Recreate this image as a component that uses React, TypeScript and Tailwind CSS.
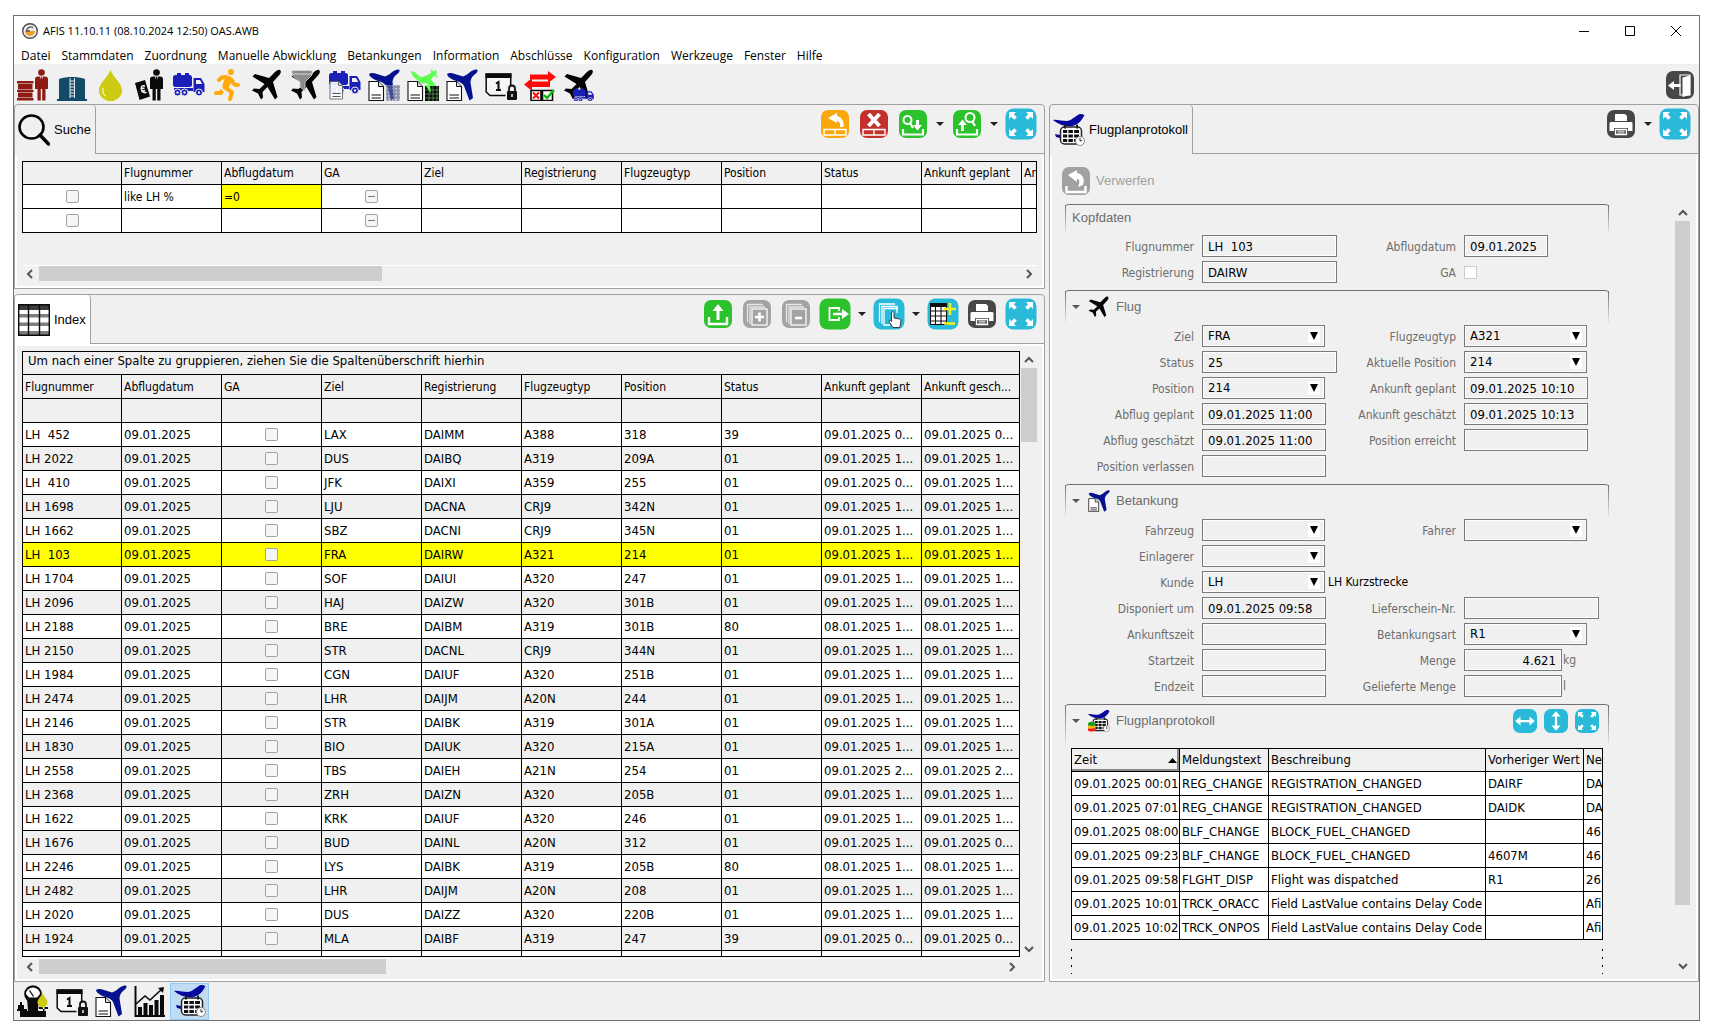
import React, { useState } from 'react';
import { FaPersonRunning } from 'react-icons/fa6';

type IconProps = { size?: number };

const PLANE =
  'M29 1c1.800 1.200.6 4-2 6.500L22 13l4.500 15-2.500 2.500L16.500 18l-5 5 .5 5.500-2 2-3-6-6-3 2-2 5.500.5 5-5L1.500 7.500 4 5l14 4 5.500-5.500C26 1 28 .2 29 1z';

/* ---------- pieces shared by several icons ---------- */

const Doc = () => (
  <g>
    <path d="M1 12.500h9.500l5 5v14H1z" fill="#fff" stroke="#111" strokeWidth="1.100" />
    <path d="M10.500 12.500v5h5" fill="#ddd" stroke="#111" strokeWidth="1" />
    <path d="M3.500 26h9.500M3.500 29h9.500" stroke="#111" strokeWidth="1.200" />
  </g>
);

const JetShape = ({ fill }: { fill: string }) => (
  <path
    d="M1 5c2-1.500 5-1 8 0l8 2.500c3-1 6-3.500 8.500-5.500C28 .5 31 0 31.500 1c.5 2-1.500 3.500-4 5.500-2 2-3 4-3 7L27 29l-3.500 2.500L18 17c-1-2-3-3.500-6-4.500C7 11 1.500 8.500 1 5z"
    fill={fill}
  />
);

const Lock = () => (
  <g>
    <rect x="22" y="22" width="10" height="9" rx="1" fill="#111" />
    <path d="M24 22v-2.500a3 3 0 0 1 6 0V22" fill="none" stroke="#111" strokeWidth="1.800" />
    <path d="M27 25v3" stroke="#fff" strokeWidth="1.400" />
  </g>
);

const TruckShape = ({ fill = '#1a1fb8' }: { fill?: string }) => (
  <g fill={fill}>
    <rect x="0" y="6" width="19" height="12" rx="2.500" />
    <path d="M4 4h4v2H4zM12 4h4v2h-4zM1 19h19v3H1z" />
    <path d="M20.500 9H28l3.500 6v8H20.500z" />
    <path d="M23 11h4l2.300 4H23z" fill="#efefef" />
    <g stroke="#efefef" strokeWidth="1">
      <circle cx="4.500" cy="23.500" r="3.500" />
      <circle cx="11.500" cy="23.500" r="3.500" />
      <circle cx="26" cy="23.500" r="3.500" />
    </g>
    <g fill="#efefef">
      <circle cx="4.500" cy="23.500" r="1.200" />
      <circle cx="11.500" cy="23.500" r="1.200" />
      <circle cx="26" cy="23.500" r="1.200" />
    </g>
  </g>
);

const Person = ({ fill, x }: { fill: string; x: number }) => (
  <g transform={`translate(${x} 0)`}>
    <circle cx="6.500" cy="3.500" r="3.300" fill={fill} />
    <path d="M3 7.500h7c2 0 3 1 3 2.700V20h-2.500V13v18.500H7.200V20H5.800v11.500H2.500V13v7H0v-9.800C0 8.500 1 7.500 3 7.500z" fill={fill} />
    <path d="M4.800 7.500 6.500 12l1.700-4.500z" fill="#efefef" />
    <path d="M6.500 8v7" stroke={fill} strokeWidth="1.200" />
  </g>
);

const Svg = ({ size = 32, children }: IconProps & { children: React.ReactNode }) => (
  <svg width={size} height={size} viewBox="0 0 32 32" className="block shrink-0" aria-hidden="true">
    {children}
  </svg>
);

/* ---------- main toolbar icons ---------- */

const StaffIcon = () => (
  <Svg>
    <g fill="#8e1b14">
      <path d="M0 12h16.500v2.500H0zM1 15h14.500v5.500H1zM0 21h16.500v2H0zM1 23.500h14.500v5H1zM0 29h16.500v2.500H0z" />
    </g>
    <Person fill="#8e1b14" x={18} />
  </Svg>
);

const TankIcon = () => (
  <Svg>
    <path d="M3 10C7 8.500 12 8 16 8s9 .5 13 2v20h2v2H1v-2h2z" fill="#124a68" />
    <path d="M14 9v20M18.500 9v20M14 12h4.500M14 15h4.500M14 18h4.500M14 21h4.500M14 24h4.500M14 27h4.500" stroke="#e3ecf1" strokeWidth="1" />
  </Svg>
);

const DropIcon = () => (
  <Svg>
    <path d="M15.500 1c3 8 11.500 13 11.500 20.500a11.500 10.500 0 0 1-23 0C4 14 12.500 9 15.500 1z" fill="#cdca12" />
    <path d="M8 19c-.8 3 .2 6 2.500 8" fill="none" stroke="#f2f0a0" strokeWidth="1.500" />
  </Svg>
);

const MoneyIcon = () => (
  <Svg>
    <path d="m1 14 10-3 5 16.500L5.500 31z" fill="#0a0a0a" />
    <path d="M11 17c-3-1-4 .5-3.500 3s2.500 5 5 3M6.500 20l4-1M7.200 22.500l4-1" stroke="#efefef" strokeWidth="1.500" fill="none" />
    <Person fill="#0a0a0a" x={16} />
  </Svg>
);

const TruckIcon = () => (
  <Svg>
    <TruckShape />
  </Svg>
);

const PlaneIcon = ({ size }: IconProps) => (
  <Svg size={size}>
    <path d={PLANE} fill="#050505" />
  </Svg>
);

const FilterPlaneIcon = () => (
  <Svg>
    <path d={PLANE} fill="#050505" />
    <path d="M2 1.500h20v4.500l-7 7v9l-5-4v-5L2 6z" fill="#8b8b8b" stroke="#d5d5d5" strokeWidth=".8" />
    <path d="M2 5h20" stroke="#d5d5d5" strokeWidth="1" />
  </Svg>
);

const TruckDocIcon = () => (
  <Svg>
    <g transform="translate(0 -2)">
      <TruckShape />
    </g>
    <g opacity=".9">
      <path d="M1 12.500h8.500l4 4V30H1z" fill="#fff" stroke="#666" />
      <path d="M9.500 12.500v4h4" fill="#ddd" stroke="#666" />
      <path d="M3.500 24.500h8M3.500 27.500h8" stroke="#444" />
    </g>
  </Svg>
);

const GridMarks = ({ color }: { color: string }) => (
  <path
    d="M19.500 16v16M23 16v16M26.500 16v16M30 16v16M18 18h14M18 21.500h14M18 25h14M18 28.500h14"
    stroke={color}
    strokeWidth="1.800"
  />
);

const JetGridIcon = () => (
  <Svg>
    <JetShape fill="#04128f" />
    <Doc />
    <rect x="18" y="16" width="14" height="16" fill="#c9cdda" />
    <GridMarks color="#8d93a8" />
    <path d="m19 15 5-2 2 17-3 1z" fill="#04128f" opacity=".55" />
  </Svg>
);

const GreenJetIcon = () => (
  <Svg>
    <path d="M4 2c3 0 6 3 9 6 4 0 8-2 12-5l4-2 1 3-6 6 5 7-3 2-7-5c-3 1-6 0-8-2C8 9 4 6 4 2z" fill="#5dff51" />
    <path d="m24 1 6 7" stroke="#5dff51" strokeWidth="1.500" />
    <Doc />
    <rect x="18" y="17" width="14" height="15" fill="#0a0a0a" />
    <path d="M18 21h14M18 25h14M18 29h14M22 17v15M26 17v15M30 17v15" stroke="#5d8f5a" strokeWidth=".8" />
    <path d="m18 16 6 8-1-8z" fill="#5dff51" />
  </Svg>
);

const JetDocIcon = ({ size }: IconProps) => (
  <Svg size={size}>
    <Doc />
    <JetShape fill="#04128f" />
  </Svg>
);

const CalendarLockIcon = () => (
  <Svg>
    <path d="M1.200 5h24.500v16.500L21 26.500H5L1.200 23z" fill="#f6f6f6" stroke="#0a0a0a" strokeWidth="1.500" />
    <path d="M.5 4.500h26V9H.5z" fill="#0a0a0a" />
    <path d="M11 14.500 13.500 13v8M11 21h5" fill="none" stroke="#0a0a0a" strokeWidth="2" />
    <rect x="20.500" y="16" width="11.500" height="16" fill="#efefef" />
    <Lock />
  </Svg>
);

const SwapIcon = () => (
  <Svg>
    <path d="M6 5.500h18V2l8 6-8 6v-3.500H6z" fill="#ff0a0a" />
    <path d="M26 12.500H8V9l-8 6.500L8 22v-4h18z" fill="#ff0a0a" />
    <path d="M7 21.500h10v10H7zM18.500 21.500h10v10h-10z" fill="#fff" stroke="#0a0a0a" strokeWidth="1.600" />
    <path d="m9 23.500 6 6m0-6-6 6" stroke="#ff0a0a" strokeWidth="2" />
    <path d="m20 26 3 3 7-8" fill="none" stroke="#08b808" strokeWidth="2.400" />
  </Svg>
);

const PlaneTruckIcon = () => (
  <Svg>
    <path d={PLANE} fill="#050505" />
    <g transform="translate(10 17) scale(.66 .58)">
      <TruckShape />
    </g>
  </Svg>
);

const FlightPlanIcon = ({ size, badge }: IconProps & { badge?: boolean }) => (
  <Svg size={size}>
    <path d="M0 6c3-1 9 1 14 1 6-1 9-6 13-7 3 0 5 1 4 2-2 4-6 9-12 10-7 1-14-2-19-6z" fill="#0708a0" />
    <path d="m2 20 5 1v3l-4-1z" fill="#0708a0" />
    <rect x="7.500" y="13" width="21" height="17" rx="4" fill="#fff" stroke="#222" strokeWidth="1.500" />
    <path d="M12 10.500v4M24 10.500v4" stroke="#222" strokeWidth="2" />
    <path d="M10 17.500h16M10 22h16M10 26.500h16" stroke="#111" strokeWidth="3.200" />
    <path d="M14.800 15v14M20.500 15v14" stroke="#fff" strokeWidth="1.200" />
    <circle cx="27" cy="27" r="4.500" fill="#fff" stroke="#888" />
    <path d="M27 24v3.200l2-1" fill="none" stroke="#333" />
    {badge && (
      <g>
        <path d="M0 20c0-4 11-4 11 0v3H0z" fill="#12a012" />
        <path d="M0 23h11v4H0z" fill="#ffb400" />
        <path d="M0 27h11v2c0 3-11 3-11 0z" fill="#f02010" />
      </g>
    )}
  </Svg>
);

const ScaleIcon = () => (
  <Svg>
    <circle cx="16" cy="9" r="8.800" fill="#0a0a0a" />
    <path d="M9 9a7 6.500 0 0 1 14 0l-3 3.500h-8z" fill="#fff" />
    <path d="m16.500 11.500-4-6" stroke="#0a0a0a" strokeWidth="1.300" />
    <path d="M10 13h12l-1 13H11zM3 26h26v6H3z" fill="#0a0a0a" />
    <path d="M3 17h2v3h2v5H1v-5h2zM0 24h10v2H0zM22 24h9v-2h-9zM26 22h1.500v5H26z" fill="#0a0a0a" />
    <path d="M25.500 8c1.500 4 5 6 5 9.500a5 5 0 0 1-10 0C20.500 14 24 12 25.500 8z" fill="#cdca12" />
  </Svg>
);

const ChartIcon = () => (
  <Svg>
    <path d="M1.500 1v30H31" fill="none" stroke="#0a0a0a" strokeWidth="2" />
    <path d="M4 22h4v9H4zM9.500 18h4v13h-4zM15 20h4v11h-4zM20.500 15h4v16h-4zM26 10h4v21h-4z" fill="#0a0a0a" />
    <path d="m2 19 9-8 5 4L28 4" fill="none" stroke="#0a0a0a" strokeWidth="1.600" />
    <path d="m24 3 6-1-1 6z" fill="#0a0a0a" />
  </Svg>
);

const SearchIcon = () => (
  <Svg>
    <ellipse cx="13.500" cy="13" rx="12" ry="11.500" fill="none" stroke="#050505" strokeWidth="2.600" />
    <path d="m22 21 8.500 9" stroke="#050505" strokeWidth="3.400" strokeLinecap="round" />
  </Svg>
);

const TableIcon = () => (
  <Svg>
    <rect x="0" y="0" width="32" height="32" fill="#fff" />
    <path d="M0 0h32v6H0z" fill="#3c3c3c" />
    <path d="M0 10h32v3.500H0zM0 18.500h32V22H0zM0 27h32v4H0z" fill="#7d7d7d" />
    <path d="M.7.7h30.600v30.600H.7zM10.500 0v32M21.500 0v32" fill="none" stroke="#0a0a0a" strokeWidth="1.400" />
  </Svg>
);

/* ---------- rounded action icons ---------- */

const Tile = ({ color, big, children }: { color: string; big?: boolean; children: React.ReactNode }) => (
  <Svg>
    {big ? (
      <rect x=".5" y=".5" width="31" height="31" rx="8" fill={color} />
    ) : (
      <rect x="2" y="2" width="28" height="28" rx="7" fill={color} />
    )}
    {children}
  </Svg>
);

const ExpandArrows = () => (
  <g fill="#fff">
    <path d="M4 4h7L8.800 6.200l3 3-2.600 2.600-3-3L4 11zM28 4v7l-2.200-2.200-3 3-2.600-2.600 3-3L21 4zM4 28v-7l2.200 2.200 3-3 2.600 2.600-3 3L11 28zM28 28h-7l2.200-2.200-3-3 2.600-2.600 3 3L28 21z" />
  </g>
);

const Expand = () => (
  <Tile color="#29bada" big>
    <ExpandArrows />
  </Tile>
);

const RowReset = () => (
  <Tile color="#f9a80c">
    <path d="M5 21.500h22v5.500H5zM16 21.500v5.500" fill="none" stroke="#fff" strokeWidth="1.400" />
    <path d="m9 10 9-5v3c4.500 1 7.500 5 6.500 11H21c.5-4-.5-5.500-3-6V15z" fill="#fff" />
  </Tile>
);

const RowDelete = () => (
  <Tile color="#c4302b">
    <path d="M5 21.500h22v5.500H5zM16 21.500v5.500" fill="none" stroke="#fff" strokeWidth="1.400" />
    <path d="m10.500 6 11 12m0-12-11 12" stroke="#fff" strokeWidth="4" />
  </Tile>
);

const SearchDown = () => (
  <Tile color="#2bc22b">
    <circle cx="10.500" cy="12" r="4" fill="none" stroke="#fff" strokeWidth="2" />
    <path d="m13 15 3 5" stroke="#fff" strokeWidth="2.200" />
    <path d="M19 12h3v5h3l-4.500 5.500L16 17h3z" fill="#fff" />
    <path d="M6 21v5.500h20V21" fill="none" stroke="#fff" strokeWidth="2.200" />
  </Tile>
);

const SearchUp = () => (
  <Tile color="#2bc22b">
    <circle cx="19" cy="9.500" r="4.500" fill="none" stroke="#fff" strokeWidth="2" />
    <path d="m21 13 3 5" stroke="#fff" strokeWidth="2.200" />
    <path d="M10 23h3v-6h3l-4.500-5.500L7 17h3z" fill="#fff" />
    <path d="M6 21v5.500h20V21" fill="none" stroke="#fff" strokeWidth="2.200" />
  </Tile>
);

const Upload = () => (
  <Tile color="#2bc22b">
    <path d="M14.500 22h3V13h4L16 6l-5.500 7h4z" fill="#fff" />
    <path d="M7 19v7h18v-7" fill="none" stroke="#fff" strokeWidth="2.400" />
  </Tile>
);

const Copies = ({ plus }: { plus?: boolean }) => (
  <Tile color="#a3a3a3">
    <path d="M6.500 24V6.500H22M9 26V9h15" fill="none" stroke="#e8e8e8" strokeWidth="1.300" />
    <rect x="11" y="11" width="15" height="16" fill="none" stroke="#f4f4f4" strokeWidth="1.400" />
    <path d={plus ? 'M14 19h9M18.500 14.500v9' : 'M15 20h7'} stroke="#fff" strokeWidth="2.600" />
  </Tile>
);

const Export = () => (
  <Tile color="#2bc22b" big>
    <path d="M20 13v-3h-9.500v12H20v-3" fill="none" stroke="#fff" strokeWidth="1.800" />
    <path d="M14 14.700h9V11l7 5-7 5v-3.700h-9z" fill="#fff" />
  </Tile>
);

const PickCopy = () => (
  <Tile color="#29bada" big>
    <path d="M6.500 24V6H22M9 26V8.500h15V12" fill="none" stroke="#fff" strokeWidth="1.300" />
    <path d="M24 15v-4.500H11V27h6" fill="none" stroke="#fff" strokeWidth="1.300" />
    <path d="M18.500 14c1.200-1 2.500 0 2.500 1.500V20l5.500 1c1.500.3 1.500 1.500 1.300 3l-1 5.500h-7L16 23.500c0-1.500 1.500-1.500 2.500 0z" fill="#fff" stroke="#3a3a3a" strokeWidth="1" />
  </Tile>
);

const ColumnsEdit = () => (
  <Tile color="#29bada" big>
    <rect x="3" y="5" width="17" height="22" fill="#fff" />
    <path d="M3 5h17v4H3z" fill="#111" />
    <path d="M3 13h17M3 18h17M3 23h17" stroke="#888" strokeWidth="1.800" />
    <path d="M3.500 5.500h16v21h-16zM8.500 5v22M14 5v22" fill="none" stroke="#111" strokeWidth="1.100" />
    <path d="M17 11h12M23 5v12M17 25.500h11" stroke="#f5f01a" strokeWidth="2.600" />
  </Tile>
);

const Print = () => (
  <Tile color="#474747">
    <path d="M10 6h10l2 2v5H10z" fill="#fff" />
    <path d="M6 14h20c1 0 1.500.6 1.500 1.500V23H23v-3H9v3H4.500v-7.500c0-1 .6-1.500 1.500-1.500z" fill="#fff" />
    <path d="M10.500 21.500h11v5h-11z" fill="#474747" stroke="#fff" strokeWidth="1.300" />
    <path d="M12.500 23.200h7M12.500 25h7" stroke="#fff" strokeWidth=".9" />
  </Tile>
);

const Exit = () => (
  <Tile color="#474747">
    <path d="M16 6h10v20H16z" fill="none" stroke="#fff" strokeWidth="1.200" />
    <path d="m18.500 8.500 7.500-2V26l-7.500 2z" fill="#fff" />
    <path d="M4 16.500 10 12v3h6.500v3H10v3z" fill="#fff" />
  </Tile>
);

const Discard = () => (
  <Tile color="#a1a1a1">
    <path d="m8 10 9-5v3c6 1 8 6 6 12l-5 2c2-5 2-7-1-8.500V17z" fill="#fff" />
    <path d="M6.500 21v6h19v-6" fill="none" stroke="#fff" strokeWidth="2.400" />
  </Tile>
);

const WideTile = ({ kind }: { kind: 'h' | 'v' | 'x' }) => (
  <svg width="24" height="24" viewBox="0 0 32 32" className="block" aria-hidden="true">
    <rect width="32" height="32" rx="9" fill="#29bada" />
    {kind === 'x' ? (
      <ExpandArrows />
    ) : (
      <path
        d="M3 16l7-6v4.500h12V10l7 6-7 6v-4.500H10V22z"
        fill="#fff"
        transform={kind === 'v' ? 'rotate(90 16 16)' : undefined}
      />
    )}
  </svg>
);

/* ---------- data ---------- */

const menu = ['Datei', 'Stammdaten', 'Zuordnung', 'Manuelle Abwicklung', 'Betankungen', 'Information', 'Abschlüsse', 'Konfiguration', 'Werkzeuge', 'Fenster', 'Hilfe'];

const RunnerIcon = () => <FaPersonRunning size={32} color="#ffa90a" />;

const toolbar = [
  { name: 'Personal', icon: StaffIcon },
  { name: 'Tanklager', icon: TankIcon },
  { name: 'Kraftstoff', icon: DropIcon },
  { name: 'Kunden', icon: MoneyIcon },
  { name: 'Fahrzeuge', icon: TruckIcon },
  { name: 'Fahrer', icon: RunnerIcon },
  { name: 'Flüge', icon: PlaneIcon },
  { name: 'Flugfilter', icon: FilterPlaneIcon },
  { name: 'Fahrzeugbelege', icon: TruckDocIcon },
  { name: 'Belegliste', icon: JetGridIcon },
  { name: 'Belegliste neu', icon: GreenJetIcon },
  { name: 'Betankungsbeleg', icon: JetDocIcon },
  { name: 'Tagesabschluss', icon: CalendarLockIcon },
  { name: 'Abgleich', icon: SwapIcon },
  { name: 'Disposition', icon: PlaneTruckIcon },
];

const taskbar = [
  { name: 'Messung', icon: ScaleIcon },
  { name: 'Tagesabschluss', icon: CalendarLockIcon },
  { name: 'Betankungsbeleg', icon: JetDocIcon },
  { name: 'Statistik', icon: ChartIcon },
];

const searchColumns = ['', 'Flugnummer', 'Abflugdatum', 'GA', 'Ziel', 'Registrierung', 'Flugzeugtyp', 'Position', 'Status', 'Ankunft geplant', 'An'];
const indexColumns = ['Flugnummer', 'Abflugdatum', 'GA', 'Ziel', 'Registrierung', 'Flugzeugtyp', 'Position', 'Status', 'Ankunft geplant', 'Ankunft gesch...'];

// flight, destination, registration, type, position, status, planned arrival, estimated arrival
const flights = [
  ['LH  452', 'LAX', 'DAIMM', 'A388', '318', '39', '09.01.2025 0...', '09.01.2025 0...'],
  ['LH 2022', 'DUS', 'DAIBQ', 'A319', '209A', '01', '09.01.2025 1...', '09.01.2025 1...'],
  ['LH  410', 'JFK', 'DAIXI', 'A359', '255', '01', '09.01.2025 0...', '09.01.2025 1...'],
  ['LH 1698', 'LJU', 'DACNA', 'CRJ9', '342N', '01', '09.01.2025 1...', '09.01.2025 1...'],
  ['LH 1662', 'SBZ', 'DACNI', 'CRJ9', '345N', '01', '09.01.2025 1...', '09.01.2025 1...'],
  ['LH  103', 'FRA', 'DAIRW', 'A321', '214', '01', '09.01.2025 1...', '09.01.2025 1...'],
  ['LH 1704', 'SOF', 'DAIUI', 'A320', '247', '01', '09.01.2025 1...', '09.01.2025 1...'],
  ['LH 2096', 'HAJ', 'DAIZW', 'A320', '301B', '01', '09.01.2025 1...', '09.01.2025 1...'],
  ['LH 2188', 'BRE', 'DAIBM', 'A319', '301B', '80', '08.01.2025 1...', '08.01.2025 1...'],
  ['LH 2150', 'STR', 'DACNL', 'CRJ9', '344N', '01', '09.01.2025 1...', '09.01.2025 1...'],
  ['LH 1984', 'CGN', 'DAIUF', 'A320', '251B', '01', '09.01.2025 1...', '09.01.2025 1...'],
  ['LH 2474', 'LHR', 'DAIJM', 'A20N', '244', '01', '09.01.2025 1...', '09.01.2025 1...'],
  ['LH 2146', 'STR', 'DAIBK', 'A319', '301A', '01', '09.01.2025 1...', '09.01.2025 1...'],
  ['LH 1830', 'BIO', 'DAIUK', 'A320', '215A', '01', '09.01.2025 1...', '09.01.2025 1...'],
  ['LH 2558', 'TBS', 'DAIEH', 'A21N', '254', '01', '09.01.2025 2...', '09.01.2025 2...'],
  ['LH 2368', 'ZRH', 'DAIZN', 'A320', '205B', '01', '09.01.2025 1...', '09.01.2025 1...'],
  ['LH 1622', 'KRK', 'DAIUF', 'A320', '246', '01', '09.01.2025 1...', '09.01.2025 1...'],
  ['LH 1676', 'BUD', 'DAINL', 'A20N', '312', '01', '09.01.2025 1...', '09.01.2025 0...'],
  ['LH 2246', 'LYS', 'DAIBK', 'A319', '205B', '80', '08.01.2025 1...', '08.01.2025 1...'],
  ['LH 2482', 'LHR', 'DAIJM', 'A20N', '208', '01', '09.01.2025 1...', '09.01.2025 1...'],
  ['LH 2020', 'DUS', 'DAIZZ', 'A320', '220B', '01', '09.01.2025 1...', '09.01.2025 1...'],
  ['LH 1924', 'MLA', 'DAIBF', 'A319', '247', '39', '09.01.2025 0...', '09.01.2025 0...'],
];

const protocol = [
  ['09.01.2025 00:01', 'REG_CHANGE', 'REGISTRATION_CHANGED', 'DAIRF', 'DA'],
  ['09.01.2025 07:01', 'REG_CHANGE', 'REGISTRATION_CHANGED', 'DAIDK', 'DA'],
  ['09.01.2025 08:00', 'BLF_CHANGE', 'BLOCK_FUEL_CHANGED', '', '46'],
  ['09.01.2025 09:23', 'BLF_CHANGE', 'BLOCK_FUEL_CHANGED', '4607M', '46'],
  ['09.01.2025 09:58', 'FLGHT_DISP', 'Flight was dispatched', 'R1', '26'],
  ['09.01.2025 10:01', 'TRCK_ORACC', 'Field LastValue contains Delay Code', '', 'Afi'],
  ['09.01.2025 10:02', 'TRCK_ONPOS', 'Field LastValue contains Delay Code', '', 'Afi'],
];

/* ---------- building blocks ---------- */

const IconButton = ({ label, disabled, children }: { label: string; disabled?: boolean; children: React.ReactNode }) => (
  <button type="button" aria-label={label} disabled={disabled} className="block size-8 shrink-0">
    {children}
  </button>
);

const SplitButton = ({ label, children }: { label: string; children: React.ReactNode }) => (
  <div className="flex items-center">
    <IconButton label={label}>{children}</IconButton>
    <button type="button" aria-label={`${label} Optionen`} className="flex h-8 w-[15px] items-center justify-end">
      <svg width="8" height="4" viewBox="0 0 8 4" aria-hidden="true">
        <path d="M0 0h8L4 4z" fill="#222" />
      </svg>
    </button>
  </div>
);

const Panel = ({ title, icon, active, actions, className = '', children }: {
  title: string;
  icon: React.ReactNode;
  active?: boolean;
  actions: React.ReactNode;
  className?: string;
  children: React.ReactNode;
}) => (
  <section className={`flex min-h-0 flex-col rounded-t border border-[#a0a0a0] bg-[#f0f0f0] ${className}`}>
    <div className="flex h-[49px] shrink-0">
      <h2 className={`flex items-center gap-1 rounded-t border-r border-[#a0a0a0] pr-1 pl-[3px] font-['Liberation_Sans',sans-serif] text-[13px] ${active ? 'bg-white' : ''}`}>
        {icon}
        {title}
      </h2>
      <div className="flex flex-1 items-start justify-end gap-[7px] border-b border-[#a0a0a0] pt-[3px] pr-[7px]">{actions}</div>
    </div>
    <div className={`flex min-h-0 flex-1 flex-col border-2 border-white p-[5px] ${active ? '' : 'border-t-[#f0f0f0]'}`}>{children}</div>
  </section>
);

const Chevron = ({ dir }: { dir: 'left' | 'right' | 'up' | 'down' }) => {
  const points = { left: 'M6 1 2 5l4 4', right: 'm3 1 4 4-4 4', up: 'M1 7l4-4 4 4', down: 'M1 3l4 4 4-4' };
  return (
    <span className="flex size-[17px] shrink-0 items-center justify-center">
      <svg width="10" height="10" viewBox="0 0 10 10" aria-hidden="true">
        <path d={points[dir]} fill="none" stroke="#555" strokeWidth="2" />
      </svg>
    </span>
  );
};

const HScroll = ({ thumb }: { thumb: string }) => (
  <div className="flex h-4 shrink-0 items-center border-t border-white">
    <Chevron dir="left" />
    <div className="h-full flex-1">
      <div className={`h-full bg-[#cdcdcd] ${thumb}`} />
    </div>
    <Chevron dir="right" />
  </div>
);

const Check = ({ label, mixed }: { label: string; mixed?: boolean }) => (
  <span className="flex items-center justify-center">
    <span className="relative block size-[13px]">
      <input type="checkbox" aria-label={label} className="block size-[13px] appearance-none rounded-xs border border-[#a3a3a3] bg-[#f6f6f6]" />
      {mixed && <span className="pointer-events-none absolute top-[6px] left-[3px] h-px w-[7px] bg-[#777]" />}
    </span>
  </span>
);

const Group = ({ title, icon, height, collapsible, actions, children }: {
  title: string;
  icon?: React.ReactNode;
  height: string;
  collapsible?: boolean;
  actions?: React.ReactNode;
  children: React.ReactNode;
}) => (
  <section className="mb-[7px]">
    <div className={`flex rounded-t border-t border-[#707070] ${height}`}>
      <span className="w-px bg-linear-to-b from-[#707070] to-transparent" />
      <div className={`flex flex-1 items-center px-[6px] ${collapsible ? 'h-8' : 'h-[26px]'}`}>
        {collapsible && (
          <button type="button" aria-label={`${title} einklappen`} className="mr-2 block">
            <svg width="8" height="4" viewBox="0 0 8 4" aria-hidden="true">
              <path d="M0 0h8L4 4z" fill="#555" />
            </svg>
          </button>
        )}
        {icon && <span className="mr-[6px]">{icon}</span>}
        <h3 className="font-['Liberation_Sans',sans-serif] text-[13px] text-[#6d6d6d]">{title}</h3>
        {actions && <div className="ml-auto flex gap-[7px] pr-[3px]">{actions}</div>}
      </div>
      <span className="w-px bg-linear-to-b from-[#707070] to-transparent" />
    </div>
    {children}
  </section>
);

const FieldGrid = ({ children }: { children: React.ReactNode }) => (
  <div className="grid grid-cols-[129px_135px_111px_auto] gap-x-2 gap-y-1">{children}</div>
);

const Label = ({ htmlFor, children }: { htmlFor: string; children: React.ReactNode }) => (
  <label htmlFor={htmlFor} className="flex h-[22px] items-center justify-end pt-px whitespace-nowrap text-[#6d6d6d]">
    {children}
  </label>
);

const boxStyle = 'h-[22px] border border-[#7a7a7a] bg-[#f0f0f0] px-[5px] text-[13px] whitespace-pre shadow-[inset_0_0_0_1px_#fff]';

const Text = ({ id, value = '', width = 'w-[124px]', unit, right }: {
  id: string;
  value?: string;
  width?: string;
  unit?: string;
  right?: boolean;
}) => (
  <span className="flex items-center whitespace-nowrap text-[#6d6d6d]">
    <input id={id} readOnly value={value} className={`${boxStyle} ${width} text-black ${right ? 'text-right' : ''}`} />
    {unit && <span className="ml-px">{unit}</span>}
  </span>
);

const Select = ({ id, value = '', note }: { id: string; value?: string; note?: string }) => (
  <span className="flex items-center whitespace-nowrap">
    <span className="relative block">
      <select id={id} defaultValue={value} className={`${boxStyle} block w-[123px] appearance-none`}>
        <option value={value}>{value}</option>
      </select>
      <span className="pointer-events-none absolute top-1 right-[5px] flex h-[14px] w-3 items-center justify-center bg-white">
        <svg width="8" height="8" viewBox="0 0 8 8" aria-hidden="true">
          <path d="M0 0h8L4 8z" fill="#000" />
        </svg>
      </span>
    </span>
    {note && <span className="ml-[3px]">{note}</span>}
  </span>
);

/* ---------- panels ---------- */

const cellBase = 'overflow-hidden border border-black px-[2px] py-0 text-left font-normal whitespace-pre';
const cell = `${cellBase} h-6 text-[13px]`;
const head = `${cellBase} h-6 text-[12px]`;
const shortHead = `${cellBase} h-[23px]`;

function SearchPanel() {
  return (
    <Panel
      title="Suche"
      icon={<SearchIcon />}
      className="shrink-0"
      actions={
        <>
          <IconButton label="Zeile zurücksetzen"><RowReset /></IconButton>
          <IconButton label="Zeile löschen"><RowDelete /></IconButton>
          <SplitButton label="Suche laden"><SearchDown /></SplitButton>
          <SplitButton label="Suche speichern"><SearchUp /></SplitButton>
          <IconButton label="Maximieren"><Expand /></IconButton>
        </>
      }
    >
      <table className="w-full table-fixed border-collapse">
        <colgroup>
          {searchColumns.map((c, i) => (
            <col key={c} className={i === 0 ? 'w-[99px]' : i < 10 ? 'w-[100px]' : ''} />
          ))}
        </colgroup>
        <thead>
          <tr>
            {searchColumns.map(c => (
              <th key={c} className={shortHead}>{c}</th>
            ))}
          </tr>
        </thead>
        <tbody>
          {[0, 1].map(r => (
            <tr key={r} className="bg-white">
              {searchColumns.map((c, i) => (
                <td key={c} className={`${head} ${r === 0 && i === 2 ? 'bg-[#ffff00]' : ''}`}>
                  {i === 0 && <Check label={`Zeile ${r + 1}`} />}
                  {i === 3 && <Check label={`GA ${r + 1}`} mixed />}
                  {r === 0 && i === 1 && 'like LH %'}
                  {r === 0 && i === 2 && '=0'}
                </td>
              ))}
            </tr>
          ))}
        </tbody>
      </table>
      <div className="h-8" />
      <HScroll thumb="w-[35%]" />
    </Panel>
  );
}

function IndexPanel() {
  const [selected, setSelected] = useState('LH  103');

  return (
    <Panel
      title="Index"
      icon={<TableIcon />}
      active
      className="flex-1"
      actions={
        <>
          <IconButton label="Hochladen"><Upload /></IconButton>
          <IconButton label="Alle öffnen" disabled><Copies plus /></IconButton>
          <IconButton label="Alle schließen" disabled><Copies /></IconButton>
          <SplitButton label="Exportieren"><Export /></SplitButton>
          <SplitButton label="Auswählen"><PickCopy /></SplitButton>
          <IconButton label="Spalten"><ColumnsEdit /></IconButton>
          <IconButton label="Drucken"><Print /></IconButton>
          <IconButton label="Maximieren"><Expand /></IconButton>
        </>
      }
    >
      <div className="flex min-h-0 flex-1">
        <div className="min-w-0 flex-1 overflow-hidden border-b border-black">
          <div className="h-[23px] border-x border-t border-black pl-[5px] text-[13px] leading-[18px]">
            Um nach einer Spalte zu gruppieren, ziehen Sie die Spaltenüberschrift hierhin
          </div>
          <table className="w-full table-fixed border-collapse">
            <colgroup>
              {indexColumns.map((c, i) => (
                <col key={c} className={i === 0 ? 'w-[99px]' : i < 9 ? 'w-[100px]' : ''} />
              ))}
            </colgroup>
            <thead>
              <tr>
                {indexColumns.map(c => (
                  <th key={c} className={head}>{c}</th>
                ))}
              </tr>
              <tr>
                {indexColumns.map(c => (
                  <td key={c} className={head} />
                ))}
              </tr>
            </thead>
            <tbody>
              {flights.map(([no, dest, reg, type, pos, status, planned, estimated], i) => (
                <tr
                  key={no}
                  onClick={() => setSelected(no)}
                  className={no === selected ? 'bg-[#ffff00]' : i % 2 ? 'bg-[#f0f0f0]' : 'bg-white'}
                >
                  <td className={cell}>{no}</td>
                  <td className={cell}>09.01.2025</td>
                  <td className={cell}><Check label={`GA ${no}`} /></td>
                  <td className={cell}>{dest}</td>
                  <td className={cell}>{reg}</td>
                  <td className={cell}>{type}</td>
                  <td className={cell}>{pos}</td>
                  <td className={cell}>{status}</td>
                  <td className={cell}>{planned}</td>
                  <td className={cell}>{estimated}</td>
                </tr>
              ))}
              <tr className="bg-white">
                {indexColumns.map((c, i) => (
                  <td key={c} className={cell}>{i === 2 && <Check label="GA" />}</td>
                ))}
              </tr>
            </tbody>
          </table>
        </div>
        <div className="ml-px flex w-4 flex-col items-center">
          <Chevron dir="up" />
          <div className="w-full flex-1">
            <div className="h-[13%] bg-[#cdcdcd]" />
          </div>
          <Chevron dir="down" />
        </div>
      </div>
      <div className="mt-px pr-[17px]">
        <HScroll thumb="w-[36%]" />
      </div>
    </Panel>
  );
}

const Dots = () => (
  <span className="flex flex-col gap-[6px]">
    {[0, 1, 2, 3].map(i => (
      <span key={i} className="h-[2px] w-px bg-black" />
    ))}
  </span>
);

function ProtocolPanel() {
  return (
    <Panel
      title="Flugplanprotokoll"
      icon={<FlightPlanIcon />}
      className="w-[650px] shrink-0"
      actions={
        <>
          <SplitButton label="Drucken"><Print /></SplitButton>
          <IconButton label="Maximieren"><Expand /></IconButton>
        </>
      }
    >
      <button type="button" disabled className="mt-1 ml-[3px] flex items-center gap-1 self-start font-['Liberation_Sans',sans-serif] text-[13px] text-[#a0a0a0]">
        <Discard />
        Verwerfen
      </button>
      <div className="mt-[7px] flex min-h-0 flex-1">
        <div className="ml-2 w-[544px] overflow-hidden">
          <Group title="Kopfdaten" height="h-[31px]">
            <FieldGrid>
              <Label htmlFor="flugnummer">Flugnummer</Label>
              <Text id="flugnummer" value="LH  103" width="w-[135px]" />
              <Label htmlFor="abflugdatum">Abflugdatum</Label>
              <Text id="abflugdatum" value="09.01.2025" width="w-[84px]" />
              <Label htmlFor="registrierung">Registrierung</Label>
              <Text id="registrierung" value="DAIRW" width="w-[135px]" />
              <Label htmlFor="ga">GA</Label>
              <span className="flex items-center">
                <input id="ga" type="checkbox" disabled className="size-[13px] appearance-none border border-[#ccc] bg-white" />
              </span>
            </FieldGrid>
          </Group>

          <Group title="Flug" icon={<PlaneIcon size={22} />} height="h-[35px]" collapsible>
            <FieldGrid>
              <Label htmlFor="ziel">Ziel</Label>
              <Select id="ziel" value="FRA" />
              <Label htmlFor="typ">Flugzeugtyp</Label>
              <Select id="typ" value="A321" />
              <Label htmlFor="status">Status</Label>
              <Text id="status" value="25" width="w-[135px]" />
              <Label htmlFor="aktuell">Aktuelle Position</Label>
              <Select id="aktuell" value="214" />
              <Label htmlFor="position">Position</Label>
              <Select id="position" value="214" />
              <Label htmlFor="an-geplant">Ankunft geplant</Label>
              <Text id="an-geplant" value="09.01.2025 10:10" />
              <Label htmlFor="ab-geplant">Abflug geplant</Label>
              <Text id="ab-geplant" value="09.01.2025 11:00" />
              <Label htmlFor="an-geschaetzt">Ankunft geschätzt</Label>
              <Text id="an-geschaetzt" value="09.01.2025 10:13" />
              <Label htmlFor="ab-geschaetzt">Abflug geschätzt</Label>
              <Text id="ab-geschaetzt" value="09.01.2025 11:00" />
              <Label htmlFor="erreicht">Position erreicht</Label>
              <Text id="erreicht" />
              <Label htmlFor="verlassen">Position verlassen</Label>
              <Text id="verlassen" />
            </FieldGrid>
          </Group>

          <Group title="Betankung" icon={<JetDocIcon size={22} />} height="h-[35px]" collapsible>
            <FieldGrid>
              <Label htmlFor="fahrzeug">Fahrzeug</Label>
              <Select id="fahrzeug" />
              <Label htmlFor="fahrer">Fahrer</Label>
              <Select id="fahrer" />
              <Label htmlFor="einlagerer">Einlagerer</Label>
              <Select id="einlagerer" />
              <span />
              <span />
              <Label htmlFor="kunde">Kunde</Label>
              <Select id="kunde" value="LH" note="LH Kurzstrecke" />
              <span />
              <span />
              <Label htmlFor="disponiert">Disponiert um</Label>
              <Text id="disponiert" value="09.01.2025 09:58" />
              <Label htmlFor="lieferschein">Lieferschein-Nr.</Label>
              <Text id="lieferschein" width="w-[135px]" />
              <Label htmlFor="ankunftszeit">Ankunftszeit</Label>
              <Text id="ankunftszeit" />
              <Label htmlFor="art">Betankungsart</Label>
              <Select id="art" value="R1" />
              <Label htmlFor="startzeit">Startzeit</Label>
              <Text id="startzeit" />
              <Label htmlFor="menge">Menge</Label>
              <Text id="menge" value="4.621" width="w-[98px]" unit="kg" right />
              <Label htmlFor="endzeit">Endzeit</Label>
              <Text id="endzeit" />
              <Label htmlFor="geliefert">Gelieferte Menge</Label>
              <Text id="geliefert" width="w-[98px]" unit="l" />
            </FieldGrid>
          </Group>

          <Group
            title="Flugplanprotokoll"
            icon={<FlightPlanIcon size={22} badge />}
            height="h-11"
            collapsible
            actions={
              <>
                <button type="button" aria-label="Breite anpassen"><WideTile kind="h" /></button>
                <button type="button" aria-label="Höhe anpassen"><WideTile kind="v" /></button>
                <button type="button" aria-label="Maximieren"><WideTile kind="x" /></button>
              </>
            }
          >
            <div className="mx-[6px] text-[13px]">
              <table className="w-full table-fixed border-collapse">
                <colgroup>
                  <col className="w-[108px]" />
                  <col className="w-[89px]" />
                  <col className="w-[217px]" />
                  <col className="w-[98px]" />
                  <col />
                </colgroup>
                <thead>
                  <tr>
                    <th className={`${shortHead} shadow-[inset_-2px_-2px_0_#8a8a8a]`}>
                      <span className="flex items-center justify-between">
                        Zeit
                        <svg width="9" height="5" viewBox="0 0 9 5" aria-hidden="true">
                          <path d="M0 5h9L4.500 0z" fill="#000" />
                        </svg>
                      </span>
                    </th>
                    <th className={shortHead}>Meldungstext</th>
                    <th className={shortHead}>Beschreibung</th>
                    <th className={shortHead}>Vorheriger Wert</th>
                    <th className={shortHead}>Ne</th>
                  </tr>
                </thead>
                <tbody>
                  {protocol.map(row => (
                    <tr key={row[0]} className="bg-white">
                      {row.map((v, i) => (
                        <td key={i} className={cell}>{v}</td>
                      ))}
                    </tr>
                  ))}
                </tbody>
              </table>
            </div>
            <div className="mx-[6px] flex justify-between pt-[9px]">
              <Dots />
              <Dots />
            </div>
          </Group>
        </div>
        <div className="mr-[1px] ml-auto flex w-[15px] flex-col items-center">
          <Chevron dir="up" />
          <div className="w-full flex-1">
            <div className="h-[93%] bg-[#cdcdcd]" />
          </div>
          <Chevron dir="down" />
        </div>
      </div>
    </Panel>
  );
}

export default function App() {
  return (
    <div className="flex h-screen bg-white pt-[15px] pr-6 pb-3 pl-[13px] font-['DejaVu_Sans_Condensed','DejaVu_Sans',sans-serif] text-[12px] text-black">
      <div className="flex min-w-0 flex-1 flex-col border border-[#707070] bg-[#f0f0f0]">
        {/* Title bar and menu */}
        <header className="bg-white font-['Open_Sans',sans-serif]">
          <div className="flex h-[30px] items-center pl-2">
            <svg width="16" height="16" viewBox="0 0 16 16" aria-hidden="true">
              <circle cx="8" cy="8" r="7.300" fill="#eee" stroke="#4d4d4d" strokeWidth="1.400" />
              <path d="M3 8h10a5 5 0 0 1-10 0z" fill="#f0a020" />
              <path d="M11 4.500C8 3 5 4.500 4.500 8H8" fill="none" stroke="#555" strokeWidth="1.400" />
            </svg>
            <h1 className="ml-[5px] text-[11px]">AFIS 11.10.11 (08.10.2024 12:50) OAS.AWB</h1>
            <div className="ml-auto flex">
              {['Minimieren', 'Vergrößern', 'Schließen'].map((label, i) => (
                <button key={label} type="button" aria-label={label} className="flex h-[30px] w-[46px] items-center justify-center">
                  <svg width="10" height="10" viewBox="0 0 10 10" fill="none" stroke="#000" aria-hidden="true">
                    <path d={['M0 5.500h10', 'M.5.5h9v9h-9z', 'm0 0 10 10M10 0 0 10'][i]} />
                  </svg>
                </button>
              ))}
            </div>
          </div>
          <nav className="flex h-[18px] items-center gap-[11px] pt-[2px] pl-[7px]">
            {menu.map(m => (
              <button key={m} type="button">{m}</button>
            ))}
          </nav>
        </header>

        {/* Main toolbar */}
        <div className="flex h-10 shrink-0 items-end gap-[7px] pr-[3px] pb-[3px] pl-[3px]">
          {toolbar.map(({ name, icon: Icon }) => (
            <IconButton key={name} label={name}><Icon /></IconButton>
          ))}
          <div className="ml-auto">
            <IconButton label="Beenden"><Exit /></IconButton>
          </div>
        </div>

        <main className="flex min-h-0 flex-1 gap-1">
          <div className="flex min-w-0 flex-1 flex-col gap-[5px]">
            <SearchPanel />
            <IndexPanel />
          </div>
          <ProtocolPanel />
        </main>

        {/* Open windows */}
        <footer className="flex h-[38px] shrink-0 items-center gap-[7px] pl-[3px]">
          {taskbar.map(({ name, icon: Icon }) => (
            <IconButton key={name} label={name}><Icon /></IconButton>
          ))}
          <button type="button" aria-label="Flugplanprotokoll" className="-ml-[3px] flex h-[37px] w-[39px] items-center justify-center border border-[#90c8f6] bg-[#c0dcf3]">
            <FlightPlanIcon />
          </button>
        </footer>
      </div>
    </div>
  );
}
